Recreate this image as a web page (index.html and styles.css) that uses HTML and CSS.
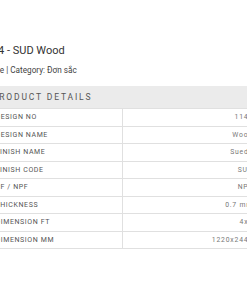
FILE: index.html
```html
<!DOCTYPE html>
<html lang="vi">
<head>
<meta charset="utf-8">
<link rel="stylesheet" href="styles.css">
</head>
<body>
<div class="page">
  <h1 class="title">1144 - SUD Wood</h1>
  <p class="meta">Suede | Category: Đơn sắc</p>
  <section class="details">
    <h2 class="details-head">PRODUCT DETAILS</h2>
    <table class="spec">
      <tr><td class="label">DESIGN NO</td><td class="value">1144</td></tr>
      <tr><td class="label">DESIGN NAME</td><td class="value">Wood</td></tr>
      <tr><td class="label">FINISH NAME</td><td class="value">Suede</td></tr>
      <tr><td class="label">FINISH CODE</td><td class="value">SUD</td></tr>
      <tr><td class="label">PF / NPF</td><td class="value">NPF</td></tr>
      <tr><td class="label">THICKNESS</td><td class="value">0.7 mm</td></tr>
      <tr><td class="label">DIMENSION FT</td><td class="value">4x8</td></tr>
      <tr><td class="label">DIMENSION MM</td><td class="value">1220x2440</td></tr>
    </table>
  </section>
</div>
</body>
</html>
```

FILE: styles.css
```css
html, body {
  margin: 0;
  padding: 0;
  background: #fff;
  overflow: hidden;
}
.page {
  width: 280px;
  margin-left: -20px;
  padding-top: 44px;
  font-family: Roboto, "Noto Sans", sans-serif;
  color: #333;
}
.title {
  margin: 0;
  font-size: 11px;
  font-weight: 400;
  line-height: 14px;
  color: #333;
}
.title {
  text-indent: -0.5px;
}
.meta {
  margin: 7px 0 0;
  padding-left: 1.5px;
  font-size: 8.2px;
  line-height: 11px;
  color: #444;
}
.details {
  margin-top: 10px;
}
.details-head {
  margin: 0;
  background: #ebebeb;
  font-size: 8.5px;
  font-weight: 400;
  letter-spacing: 1.85px;
  line-height: 22px;
  padding-left: 12px;
  color: #555;
}
.spec {
  width: 100%;
  border-collapse: collapse;
}
.spec td {
  border-top: 1px solid #e0e0e0;
  border-bottom: 1px solid #e0e0e0;
  height: 16.5px;
  padding: 0;
}
.spec .label {
  width: 126px;
  padding-left: 15.5px;
  font-size: 7px;
  letter-spacing: 0.6px;
  color: #555;
  border-right: 1px solid #e0e0e0;
}
.spec .value {
  text-align: right;
  padding-right: 7px;
  font-size: 6.8px;
  letter-spacing: 0.8px;
  color: #777;
}
```
